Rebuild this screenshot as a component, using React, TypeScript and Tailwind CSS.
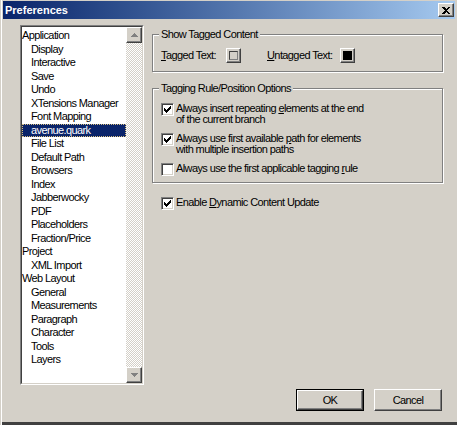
import type { ReactNode } from "react";

const items: [string, number][] = [
  ["Application", 0],
  ["Display", 1],
  ["Interactive", 1],
  ["Save", 1],
  ["Undo", 1],
  ["XTensions Manager", 1],
  ["Font Mapping", 1],
  ["avenue.quark", 1],
  ["File List", 1],
  ["Default Path", 1],
  ["Browsers", 1],
  ["Index", 1],
  ["Jabberwocky", 1],
  ["PDF", 1],
  ["Placeholders", 1],
  ["Fraction/Price", 1],
  ["Project", 0],
  ["XML Import", 1],
  ["Web Layout", 0],
  ["General", 1],
  ["Measurements", 1],
  ["Paragraph", 1],
  ["Character", 1],
  ["Tools", 1],
  ["Layers", 1],
];

const raised =
  "border border-t-white border-l-white border-r-[#404040] border-b-[#404040] shadow-[inset_-1px_-1px_0_#808080]";

// classic 7x7 tick, one rect per pixel
const tick = ["......X", ".....XX", "X...XXX", "XX.XXX.", "XXXXX..", ".XXX...", "..X...."];

function CheckBox({ checked }: { checked?: boolean }) {
  return (
    <span className="w-[13px] h-[13px] shrink-0 flex items-center justify-center bg-white border border-t-[#808080] border-l-[#808080] border-r-white border-b-white shadow-[inset_1px_1px_0_#404040,inset_-1px_-1px_0_#d4d0c8]">
      {checked && (
        <svg width="7" height="7" viewBox="0 0 7 7" shapeRendering="crispEdges">
          {tick.flatMap((row, y) =>
            row.split("").map((c, x) => (c === "X" ? <rect key={`${x}-${y}`} x={x} y={y} width="1" height="1" fill="#000" /> : null))
          )}
        </svg>
      )}
    </span>
  );
}

function Group({ title, className, children }: { title: string; className: string; children: ReactNode }) {
  return (
    <div className={`relative border border-[#808080] shadow-[inset_1px_1px_0_#fff,1px_1px_0_#fff] ${className}`}>
      <span className="absolute -top-[7px] left-[6px] px-[2px] bg-[#d4d0c8] leading-[13px]">{title}</span>
      {children}
    </div>
  );
}

function Option({ checked, children }: { checked?: boolean; children: ReactNode }) {
  return (
    <div className="flex items-start gap-[2px]">
      <span className="mt-[1px]">
        <CheckBox checked={checked} />
      </span>
      <span className="leading-[10.5px] pt-[1px]">{children}</span>
    </div>
  );
}

function Arrow({ up }: { up?: boolean }) {
  return (
    <svg width="7" height="4" viewBox="0 0 7 4" shapeRendering="crispEdges">
      <path d={up ? "M3 0h1v1h1v1h1v1h1v1H0V3h1V2h1V1h1z" : "M0 0h7v1H6v1H5v1H4v1H3V3H2V2H1V1H0z"} fill="#808080" />
    </svg>
  );
}

export default function App() {
  return (
    <div
      className="w-[457px] h-[425px] bg-[#d4d0c8] text-black text-[11px] tracking-[-0.6px] flex flex-col overflow-hidden shadow-[inset_1px_0_0_#d4d0c8,inset_2px_0_0_#fff,inset_0_-3px_0_#404040]"
      style={{ fontFamily: "'Liberation Sans', Arial, sans-serif" }}
    >
      {/* title bar */}
      <div className="mt-[1px] ml-[3px] mr-[2px] h-[18px] flex items-center bg-linear-to-r from-[#0a246a] to-[#a6caf0]">
        <span className="ml-[2px] text-white font-bold tracking-normal">Preferences</span>
        <button className={`ml-auto mr-[1px] w-[16px] h-[14px] bg-[#d4d0c8] flex items-center justify-center ${raised}`}>
          <svg width="8" height="7" viewBox="0 0 8 7" shapeRendering="crispEdges">
            <path d="M0 0h2l2 2 2-2h2L5 3.5 8 7H6L4 5 2 7H0l3-3.5z" fill="#000" />
          </svg>
        </button>
      </div>

      <div className="flex pl-[20px] pt-[6px]">
        {/* tree list */}
        <div className="w-[124px] h-[360px] border border-t-[#808080] border-l-[#808080] border-r-white border-b-white">
          <div className="h-full flex border border-t-[#404040] border-l-[#404040] border-r-[#d4d0c8] border-b-[#d4d0c8]">
            <div className="flex-1 bg-white pt-[2px] overflow-hidden">
              {items.map(([label, indent]) => {
                const sel = label === "avenue.quark";
                return (
                  <div
                    key={label}
                    className={`h-[13.5px] leading-[13.5px] whitespace-nowrap ${indent ? "pl-[9px]" : "pl-0"} ${
                      sel ? "bg-[#0a246a] text-white outline outline-dotted outline-[#d8c080] -outline-offset-1" : ""
                    }`}
                  >
                    {label}
                  </div>
                );
              })}
            </div>
            <div className="w-[16px] flex flex-col bg-[repeating-conic-gradient(#fff_0_25%,#d4d0c8_0_50%)] bg-[length:2px_2px]">
              <div className={`h-[16px] bg-[#d4d0c8] flex items-center justify-center ${raised}`}>
                <Arrow up />
              </div>
              <div className="flex-1" />
              <div className={`h-[16px] bg-[#d4d0c8] flex items-center justify-center ${raised}`}>
                <Arrow />
              </div>
            </div>
          </div>
        </div>

        {/* options */}
        <div className="ml-[8px] w-[291px] flex flex-col">
          <Group title="Show Tagged Content" className="mt-[9px] h-[38px] pt-[12px] pl-[8px]">
            <div className="flex items-center">
              <span className="w-[65px]">
                <u>T</u>agged Text:
              </span>
              <span className={`w-[15px] h-[15px] bg-[#d4d0c8] flex items-center justify-center ${raised}`}>
                <span className="w-[9px] h-[9px] bg-[#d4d0c8] border border-t-[#404040] border-l-[#404040] border-r-[#808080] border-b-[#808080]" />
              </span>
              <span className="ml-[26px] w-[73px]">
                <u>U</u>ntagged Text:
              </span>
              <span className={`w-[15px] h-[15px] bg-[#d4d0c8] flex items-center justify-center ${raised}`}>
                <span className="w-[9px] h-[9px] bg-black" />
              </span>
            </div>
          </Group>

          <Group title="Tagging Rule/Position Options" className="mt-[16px] h-[95px] pt-[13px] pl-[8px] flex flex-col gap-[8px]">
            <Option checked>
              Always insert repeating <u>e</u>lements at the end
              <br />
              of the current branch
            </Option>
            <Option checked>
              Always use first available <u>p</u>ath for elements
              <br />
              with multiple insertion paths
            </Option>
            <Option>
              Always use the first applicable tagging <u>r</u>ule
            </Option>
          </Group>

          <div className="mt-[13px] ml-[9px]">
            <Option checked>
              Enable <u>D</u>ynamic Content Update
            </Option>
          </div>
        </div>
      </div>

      {/* buttons */}
      <div className="mt-[4px] pr-[15px] flex justify-end gap-[10px]">
        <div className="w-[68px] h-[22px] border border-black">
          <button className={`w-full h-full bg-[#d4d0c8] ${raised}`}>OK</button>
        </div>
        <button className={`w-[68px] h-[22px] bg-[#d4d0c8] ${raised}`}>Cancel</button>
      </div>
    </div>
  );
}
